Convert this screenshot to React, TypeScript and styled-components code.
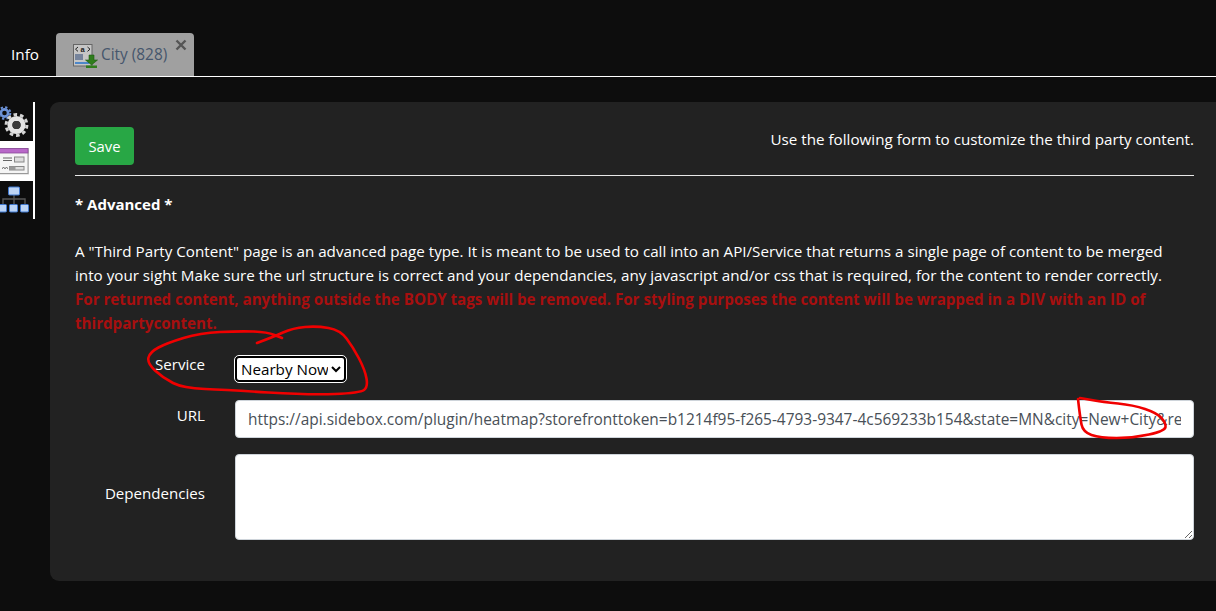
import React from "react";
import styled, { createGlobalStyle } from "styled-components";

const Global = createGlobalStyle`
  html, body { margin: 0; padding: 0; background: #0d0d0d; }
  body { font-family: "Open Sans", "Noto Sans", sans-serif; color: #fff; font-size: 15.2px; }
  * { box-sizing: border-box; }
`;
const Page = styled.div`
  position: relative; width: 1216px; height: 611px; overflow: hidden; background: #0d0d0d;
`;
const TabBar = styled.div`
  height: 77px; padding-top: 33px; border-bottom: 1px solid #fff; display: flex; align-items: flex-start;
`;
const InfoTab = styled.div`
  width: 56px; height: 43px; padding: 10px 0 0 11px; font-size: 15.3px; line-height: 22px;
`;
const ActiveTab = styled.div`
  position: relative; width: 138px; height: 43px; background: #a0a0a0; border-radius: 4px 4px 0 0;
  display: flex; align-items: flex-start; gap: 3px; padding: 11px 0 0 17px; color: #46566c; font-size: 15.4px; line-height: 21px;
`;
const TabIcon = styled.svg`
  flex: none; width: 25px; height: 26px;
`;
const Close = styled.span`
  position: absolute; top: 6px; right: 7px; width: 12px; height: 12px; display: flex;
`;
const Body = styled.div`
  display: flex; align-items: flex-start; gap: 15px; padding-top: 25px;
`;
const Side = styled.div`
  width: 35px; height: 117px; border-right: 2px solid #fff; display: flex; flex-direction: column;
`;
const SideItem = styled.div<{ $active?: boolean; $h: number }>`
  height: ${p => p.$h}px; background: ${p => (p.$active ? "#fff" : "transparent")}; display: flex;
`;
const Panel = styled.div`
  flex: 1; height: 479px; background: #222; border-radius: 9px 0 0 9px; padding: 25px 22px 0 25px;
`;
const Top = styled.div`
  display: flex; justify-content: space-between; align-items: flex-start; height: 49px; border-bottom: 1px solid #e8e8e8;
`;
const SaveButton = styled.button`
  width: 59px; height: 38px; background: #28a745; border: 0; border-radius: 4px; color: #fff;
  font: 14.8px "Open Sans", sans-serif; padding: 0;
`;
const Hint = styled.div`
  font-size: 15.2px; line-height: 24px; margin-top: 0;
`;
const Heading = styled.div`
  font-weight: 700; font-size: 15px; line-height: 24px; margin-top: 16px;
`;
const Para = styled.p`
  margin: 23px 0 0; font-size: 15.2px; line-height: 24px; width: 1115px;
`;
const Warn = styled.strong`
  display: block; color: #a80f0f; font-weight: 700; font-size: 15.15px;
`;
const Row = styled.div<{ $h: number; $mt: number }>`
  display: flex; align-items: flex-start; height: ${p => p.$h}px; margin-top: ${p => p.$mt}px;
`;
const Label = styled.label<{ $top: number }>`
  width: 130px; text-align: right; font-size: 15.1px; line-height: 16px; padding-top: ${p => p.$top}px; flex: none;
`;
const Field = styled.div`
  flex: 1; margin-left: 30px; display: flex;
`;
const Select = styled.select`
  width: 111px; height: 26px; background: #fff; color: #000; border: 2px solid #000; outline: 1px solid #fff;
  outline-offset: 0; border-radius: 4px; font: 15.2px "Open Sans", sans-serif; padding: 0;
`;
const TextInput = styled.input`
  width: 100%; height: 38px; border: 1px solid #ced4da; border-radius: 4px; padding: 0 12px; background: #fff;
  color: #495057; font: 15.45px "Open Sans", sans-serif; outline: 0;
`;
const TextArea = styled.textarea`
  width: 100%; height: 86px; border: 1px solid #ced4da; border-radius: 4px; background: #fff; display: block; outline: 0;
`;
const Scribbles = styled.svg`
  position: absolute; left: 0; top: 0; width: 1216px; height: 611px; pointer-events: none;
`;

const DocIcon = () => (
  <TabIcon viewBox="0 0 25 26">
    <rect x=".5" y=".5" width="18.5" height="21.5" fill="#c6c6c6" stroke="#666" />
    <path d="M5 3L2.5 5.2 5 7.4M14.5 3L17 5.2 14.5 7.4" fill="none" stroke="#222" strokeWidth="1" />
    <text x="9.7" y="7.6" fontSize="7.5" fontFamily="Liberation Sans" fontWeight="700" textAnchor="middle" fill="#222">a</text>
    <rect x="2" y="10" width="8" height="6" fill="#76849c" />
    <rect x="2" y="18" width="14" height="2" fill="#4d87c9" />
    <path d="M16 11h5v5h3.5L18.5 21l-6-5H16z" fill="#2f7d1c" stroke="#1d5a10" strokeWidth=".6" />
    <rect x="13" y="21.5" width="11" height="2.5" fill="#2f7d1c" />
  </TabIcon>
);
const Gears = () => (
  <svg width="33" height="39" viewBox="0 0 33 39">
    <g fill="none" stroke="#6c92d8">
      <circle cx="4.5" cy="11" r="3.6" strokeWidth="2.6" />
      <circle cx="4.5" cy="11" r="5.8" strokeWidth="2" strokeDasharray="2.3 2.25" />
    </g>
    <circle cx="16.5" cy="23" r="6.6" fill="none" stroke="#e4e4e4" strokeWidth="5" />
    <circle cx="16.5" cy="23" r="10.4" fill="none" stroke="#d4d4d4" strokeWidth="3" strokeDasharray="3.6 2.93" />
    <circle cx="16.5" cy="23" r="4" fill="#3a3a3a" />
  </svg>
);
const Layout = () => (
  <svg width="33" height="40" viewBox="0 0 33 40">
    <rect x="-6" y="7.5" width="34" height="25" fill="#000" opacity=".18" transform="translate(1 1)" />
    <rect x="-6" y="7.5" width="34" height="25" fill="#f5f5f5" stroke="#999" strokeWidth="1" />
    <rect x="-6" y="7.5" width="34" height="4.5" fill="#b868c8" stroke="#8b4a9a" strokeWidth=".8" />
    <path d="M3 17h9M3 19.5h9" stroke="#666" strokeWidth="1" />
    <rect x="14.5" y="16" width="9.5" height="5" fill="#ddd" stroke="#888" />
    <path d="M2 27.5l1.5-1 1.5 1 1.5-1 1.5 1" stroke="#555" fill="none" />
    <rect x="9.5" y="25.5" width="14.5" height="3.5" fill="#ddd" stroke="#888" />
    <rect x="9.5" y="25.5" width="6" height="3.5" fill="#999" />
  </svg>
);
const Org = () => (
  <svg width="33" height="37" viewBox="0 0 33 37">
    <path d="M14 14v9M3 23v-5h22v5" fill="none" stroke="#555" strokeWidth="1.4" />
    <g fill="#bcd4f5" stroke="#3f78d0" strokeWidth="1">
      <rect x="8.5" y="6" width="11" height="8" rx="1" />
      <rect x="-2" y="23.5" width="8.5" height="7.5" rx="1" />
      <rect x="9.5" y="23.5" width="8" height="7.5" rx="1" />
      <rect x="20.5" y="23.5" width="8" height="7.5" rx="1" />
    </g>
  </svg>
);

const smooth = (pts: number[][]) => {
  let d = `M${pts[0][0]} ${pts[0][1]}`;
  for (let i = 1; i < pts.length - 1; i++) {
    const mx = (pts[i][0] + pts[i + 1][0]) / 2;
    const my = (pts[i][1] + pts[i + 1][1]) / 2;
    d += `Q${pts[i][0]} ${pts[i][1]} ${mx} ${my}`;
  }
  const l = pts[pts.length - 1];
  return d + `L${l[0]} ${l[1]}`;
};
const serviceLoop = [[257,343],[273,337],[293,328],[317,326],[340,330],[353,347],[365,370],[368,387],[360,393],[310,395],[227,390],[183,388],[163,378],[147,363],[150,352],[167,343],[200,333],[240,331],[267,332],[282,338]];
const cityLoop = [[1078,399],[1080,417],[1083,432],[1100,438],[1133,438],[1165,431],[1166,423],[1157,413],[1133,405],[1103,402],[1080,398]];

export default function App() {
  return (
    <Page>
      <Global />
      <TabBar>
        <InfoTab>Info</InfoTab>
        <ActiveTab>
          <DocIcon />
          <span>City (828)</span>
          <Close>
            <svg width="12" height="12" viewBox="0 0 12 12"><path d="M1.5 1.5l9 9M10.5 1.5l-9 9" stroke="#555" strokeWidth="2.4" /></svg>
          </Close>
        </ActiveTab>
      </TabBar>
      <Body>
        <Side>
          <SideItem $h={39}><Gears /></SideItem>
          <SideItem $h={40} $active><Layout /></SideItem>
          <SideItem $h={38}><Org /></SideItem>
        </Side>
        <Panel>
          <Top>
            <SaveButton>Save</SaveButton>
            <Hint>Use the following form to customize the third party content.</Hint>
          </Top>
          <Heading>* Advanced *</Heading>
          <Para>
            A "Third Party Content" page is an advanced page type. It is meant to be used to call into an API/Service that returns a single page of content to be merged into your sight Make sure the url structure is correct and your dependancies, any javascript and/or css that is required, for the content to render correctly.
            <Warn>For returned content, anything outside the BODY tags will be removed. For styling purposes the content will be wrapped in a DIV with an ID of thirdpartycontent.</Warn>
          </Para>
          <Row $h={26} $mt={21}>
            <Label $top={0}>Service</Label>
            <Field>
              <Select defaultValue="Nearby Now"><option>Nearby Now</option></Select>
            </Field>
          </Row>
          <Row $h={38} $mt={18}>
            <Label $top={7}>URL</Label>
            <Field>
              <TextInput readOnly value="https://api.sidebox.com/plugin/heatmap?storefronttoken=b1214f95-f265-4793-9347-4c569233b154&state=MN&city=New+City&rep=1" />
            </Field>
          </Row>
          <Row $h={86} $mt={16}>
            <Label $top={31}>Dependencies</Label>
            <Field><TextArea /></Field>
          </Row>
        </Panel>
      </Body>
      <Scribbles viewBox="0 0 1216 611">
        <g fill="none" stroke="#f00000" strokeWidth="2.6" strokeLinecap="round" strokeLinejoin="round">
          <path d={smooth(serviceLoop)} />
          <path d={smooth(cityLoop)} />
        </g>
      </Scribbles>
    </Page>
  );
}
